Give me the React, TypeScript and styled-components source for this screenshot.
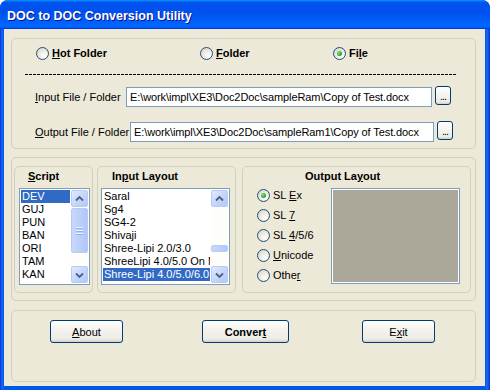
import React from 'react';
import styled, { createGlobalStyle } from 'styled-components';

const GlobalStyle = createGlobalStyle`
  html, body {
    margin: 0;
    padding: 0;
    background: #ffffff;
  }
  body {
    font-family: 'Liberation Sans', Arial, sans-serif;
    font-size: 11px;
    color: #000;
  }
`;

const Window = styled.div`
  width: 490px;
  height: 390px;
  display: flex;
  flex-direction: column;
  border-radius: 8px 8px 0 0;
  overflow: hidden;
  background: #0831d9;
`;

const TitleBar = styled.div`
  height: 29px;
  flex: none;
  display: flex;
  align-items: center;
  padding: 2px 0 0 7px;
  box-sizing: border-box;
  background: linear-gradient(
    180deg,
    #0997ff,
    #0053ee 8%,
    #0050ee 40%,
    #0066ff 88%,
    #0066ff 93%,
    #005bff 95%,
    #003dd7 96%,
    #003dd7
  );
  color: #fff;
  font-weight: 700;
  font-size: 12.5px;
  text-shadow: 1px 1px #0f1089;
`;

const Frame = styled.div`
  flex: 1;
  display: flex;
  padding: 0 5px 4px 4px;
  background: linear-gradient(90deg, #0831d9, #166aee 2px, #0055ea 4px, #0055ea calc(100% - 5px), #166aee calc(100% - 3px), #0831d9);
`;

const Client = styled.div`
  flex: 1;
  display: flex;
  flex-direction: column;
  padding: 9px 9px 4px 7px;
  background: #ece9d8;
`;

const Group = styled.div<{ $h: number; $mt?: number }>`
  box-sizing: border-box;
  height: ${(p) => p.$h}px;
  margin-top: ${(p) => p.$mt || 0}px;
  border: 1px solid #d0d0bf;
  border-radius: 5px;
`;

const SourceGroup = styled(Group)`
  display: flex;
  flex-direction: column;
  padding-top: 6px;
`;

const ModeRow = styled.div`
  display: grid;
  grid-template-columns: 164px 133px auto;
  height: 16px;
  padding-left: 24px;
`;

const Dashes = styled.div`
  height: 1px;
  margin: 13px 18px 0 13px;
  background: repeating-linear-gradient(90deg, #000 0 3px, transparent 3px 4px);
`;

const FileRow = styled.div<{ $mt: number }>`
  display: flex;
  align-items: center;
  height: 22px;
  margin-top: ${(p) => p.$mt}px;
  padding-left: 23px;
`;

const FieldLabel = styled.div<{ $w: number }>`
  width: ${(p) => p.$w}px;
  white-space: nowrap;
`;

const PathBox = styled.div<{ $w: number }>`
  box-sizing: border-box;
  width: ${(p) => p.$w}px;
  height: 20px;
  border: 1px solid #7f9db9;
  background: #fff;
  padding: 3px 0 0 3px;
  white-space: nowrap;
  overflow: hidden;
  letter-spacing: -0.1px;
`;

const BrowseButton = styled.div`
  box-sizing: border-box;
  width: 16px;
  height: 19px;
  margin: -3px 0 0 3px;
  border: 1px solid #003c74;
  border-radius: 3px;
  background: linear-gradient(180deg, #fff, #ecebe6 86%, #d6d0c5);
  font-size: 11px;
  text-align: center;
  line-height: 19px;
  letter-spacing: -1px;
`;

const LayoutGroup = styled(Group)`
  display: flex;
  padding: 8px 4px 7px 2px;
`;

const SubGroup = styled.div<{ $w: number; $ml: number }>`
  box-sizing: border-box;
  width: ${(p) => p.$w}px;
  margin-left: ${(p) => p.$ml}px;
  height: 100%;
  border: 1px solid #d0d0bf;
  border-radius: 5px;
  display: flex;
  flex-direction: column;
`;

const SubTitle = styled.div<{ $pl: number }>`
  height: 18px;
  line-height: 18px;
  padding-left: ${(p) => p.$pl}px;
  font-weight: 700;
  white-space: nowrap;
`;

const ListBox = styled.div<{ $w: number; $ml: number }>`
  box-sizing: border-box;
  width: ${(p) => p.$w}px;
  height: 97px;
  margin: 3px 0 0 ${(p) => p.$ml}px;
  border: 1px solid #7f9db9;
  background: #fff;
  display: flex;
  padding: 1px;
`;

const Items = styled.div`
  flex: 1;
  overflow: hidden;
  padding-right: 1px;
`;

const Item = styled.div<{ $sel?: boolean }>`
  height: 13px;
  line-height: 13px;
  padding-left: 1px;
  white-space: nowrap;
  overflow: hidden;
  background: ${(p) => (p.$sel ? '#316ac5' : 'transparent')};
  color: ${(p) => (p.$sel ? '#fff' : '#000')};
`;

const ScrollBar = styled.div`
  width: 17px;
  display: flex;
  flex-direction: column;
  background: #fdfdfa;
`;

const ScrollButton = styled.div`
  box-sizing: border-box;
  height: 17px;
  border: 1px solid #b7cbf5;
  border-radius: 2px;
  background: linear-gradient(135deg, #e1eafe, #c1d3fb 60%, #b4c8f6);
  display: flex;
  align-items: center;
  justify-content: center;
`;

const Track = styled.div`
  flex: 1;
  position: relative;
`;

const Thumb = styled.div`
  position: absolute;
  left: 0;
  right: 0;
  box-sizing: border-box;
  border: 1px solid #b7cbf5;
  border-radius: 2px;
  background: linear-gradient(90deg, #c9d8fc, #bcd0fa 50%, #b0c6f6);
  display: flex;
  flex-direction: column;
  align-items: center;
  justify-content: center;
  gap: 1px;
`;

const Grip = styled.div`
  width: 7px;
  height: 1px;
  background: #eef4fe;
  border-bottom: 1px solid #8cb0f8;
`;

const OutputBody = styled.div`
  display: flex;
  padding-left: 14px;
`;

const OptionList = styled.div`
  display: flex;
  flex-direction: column;
  width: 74px;
`;

const OptionRow = styled.div`
  height: 20px;
  display: flex;
  align-items: center;
`;

const Preview = styled.div`
  box-sizing: border-box;
  width: 129px;
  height: 96px;
  margin-top: 3px;
  border: 1px solid #7f9db9;
  box-shadow: inset 0 0 0 1px #fff;
  background: #aca899;
`;

const ButtonGroup = styled(Group)`
  display: flex;
  align-items: flex-start;
  padding: 9px 0 0 38px;
`;

const PushButton = styled.div<{ $w: number; $ml?: number; $bold?: boolean }>`
  box-sizing: border-box;
  width: ${(p) => p.$w}px;
  height: 23px;
  margin-left: ${(p) => p.$ml || 0}px;
  border: 1px solid #003c74;
  border-radius: 3px;
  background: linear-gradient(180deg, #ffffff, #f4f3ee 40%, #ecebe6 86%, #d6d0c5);
  display: flex;
  align-items: center;
  justify-content: center;
  font-weight: ${(p) => (p.$bold ? 700 : 400)};
`;

const RadioWrap = styled.div`
  display: flex;
  align-items: center;
  gap: 3px;
  white-space: nowrap;
`;

const RadioLabel = styled.span<{ $bold?: boolean }>`
  font-weight: ${(p) => (p.$bold ? 700 : 400)};
`;

const Circle = styled.div<{ $on?: boolean }>`
  box-sizing: border-box;
  width: 13px;
  height: 13px;
  border-radius: 50%;
  border: 1px solid #1c5180;
  background: radial-gradient(circle at 65% 70%, #ffffff 0, #f1efe6 35%, #d9d5c6 90%);
  display: flex;
  align-items: center;
  justify-content: center;
  &::after {
    content: '';
    display: ${(p) => (p.$on ? 'block' : 'none')};
    width: 5px;
    height: 5px;
    border-radius: 50%;
    background: radial-gradient(circle at 35% 35%, #7ee07e, #21a121 70%);
  }
`;

const Radio = ({ on, bold, children }: { on?: boolean; bold?: boolean; children: React.ReactNode }) => (
  <RadioWrap>
    <Circle $on={on} />
    <RadioLabel $bold={bold}>{children}</RadioLabel>
  </RadioWrap>
);

const Arrow = ({ down }: { down?: boolean }) => (
  <svg width="9" height="6" viewBox="0 0 9 6">
    <path
      d={down ? 'M1 1.5 L4.5 5 L8 1.5' : 'M1 4.5 L4.5 1 L8 4.5'}
      fill="none"
      stroke="#4d6185"
      strokeWidth="1.8"
    />
  </svg>
);

const Scroller = ({ top, size }: { top: number; size: number }) => (
  <ScrollBar>
    <ScrollButton>
      <Arrow />
    </ScrollButton>
    <Track>
      <Thumb style={{ top, height: size }}>
        {size > 20 && (
          <>
            <Grip />
            <Grip />
            <Grip />
          </>
        )}
      </Thumb>
    </Track>
    <ScrollButton>
      <Arrow down />
    </ScrollButton>
  </ScrollBar>
);

const scripts = ['DEV', 'GUJ', 'PUN', 'BAN', 'ORI', 'TAM', 'KAN'];
const layouts = ['Saral', 'Sg4', 'SG4-2', 'Shivaji', 'Shree-Lipi 2.0/3.0', 'ShreeLipi 4.0/5.0 On Mac', 'Shree-Lipi 4.0/5.0/6.0'];

const App = () => {
  return (
    <>
      <GlobalStyle />
      <Window>
        <TitleBar>DOC to DOC Conversion Utility</TitleBar>
        <Frame>
          <Client>
            <SourceGroup $h={111}>
              <ModeRow>
                <Radio bold>
                  <u>H</u>ot Folder
                </Radio>
                <Radio bold>
                  <u>F</u>older
                </Radio>
                <Radio bold on>
                  Fi<u>l</u>e
                </Radio>
              </ModeRow>
              <Dashes />
              <FileRow $mt={11}>
                <FieldLabel $w={91}>
                  <u>I</u>nput File / Folder
                </FieldLabel>
                <PathBox $w={306}>E:\work\impl\XE3\Doc2Doc\sampleRam\Copy of Test.docx</PathBox>
                <BrowseButton>...</BrowseButton>
              </FileRow>
              <FileRow $mt={13}>
                <FieldLabel $w={95}>
                  <u>O</u>utput File / Folder
                </FieldLabel>
                <PathBox $w={304}>E:\work\impl\XE3\Doc2Doc\sampleRam1\Copy of Test.docx</PathBox>
                <BrowseButton>...</BrowseButton>
              </FileRow>
            </SourceGroup>

            <LayoutGroup $h={144} $mt={8}>
              <SubGroup $w={79} $ml={0}>
                <SubTitle $pl={13}>
                  <u>S</u>cript
                </SubTitle>
                <ListBox $w={71} $ml={4}>
                  <Items>
                    {scripts.map((s, i) => (
                      <Item key={s} $sel={i === 0}>
                        {s}
                      </Item>
                    ))}
                  </Items>
                  <Scroller top={1} size={45} />
                </ListBox>
              </SubGroup>

              <SubGroup $w={139} $ml={4}>
                <SubTitle $pl={14}>
                  In<u>p</u>ut Layout
                </SubTitle>
                <ListBox $w={129} $ml={3}>
                  <Items>
                    {layouts.map((s, i) => (
                      <Item key={s} $sel={i === layouts.length - 1}>
                        {s}
                      </Item>
                    ))}
                  </Items>
                  <Scroller top={38} size={7} />
                </ListBox>
              </SubGroup>

              <SubGroup $w={229} $ml={6}>
                <SubTitle $pl={62}>
                  Output La<u>y</u>out
                </SubTitle>
                <OutputBody>
                  <OptionList>
                    <OptionRow>
                      <Radio on>
                        SL <u>E</u>x
                      </Radio>
                    </OptionRow>
                    <OptionRow>
                      <Radio>
                        SL <u>7</u>
                      </Radio>
                    </OptionRow>
                    <OptionRow>
                      <Radio>
                        SL <u>4</u>/5/6
                      </Radio>
                    </OptionRow>
                    <OptionRow>
                      <Radio>
                        <u>U</u>nicode
                      </Radio>
                    </OptionRow>
                    <OptionRow>
                      <Radio>
                        Othe<u>r</u>
                      </Radio>
                    </OptionRow>
                  </OptionList>
                  <Preview />
                </OutputBody>
              </SubGroup>
            </LayoutGroup>

            <ButtonGroup $h={72} $mt={9}>
              <PushButton $w={73}>
                <span>
                  <u>A</u>bout
                </span>
              </PushButton>
              <PushButton $w={87} $ml={79} $bold>
                <span>
                  Conver<u>t</u>
                </span>
              </PushButton>
              <PushButton $w={73} $ml={73}>
                <span>
                  E<u>x</u>it
                </span>
              </PushButton>
            </ButtonGroup>
          </Client>
        </Frame>
      </Window>
    </>
  );
};

export default App;
